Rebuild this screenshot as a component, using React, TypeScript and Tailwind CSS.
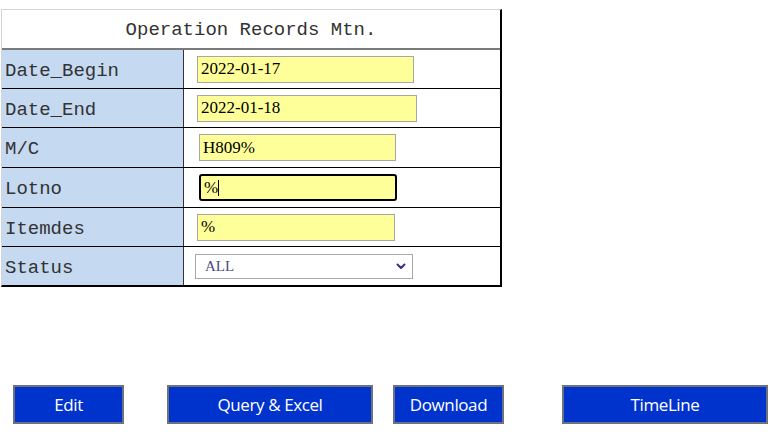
import React from 'react';

const mono = "font-['Liberation_Mono','DejaVu_Sans_Mono',monospace]";
const serif = "font-['Liberation_Serif','Times_New_Roman',serif]";

const Field = ({ value, className, focused }: { value: string; className: string; focused?: boolean }) => (
  <div
    className={`${className} h-[27px] flex items-center bg-[#ffff99] text-[17px] text-black ${serif} ${
      focused ? 'border-2 border-black rounded-[3px] pl-[3px]' : 'border border-[#a8a8a0] pl-[3px]'
    }`}
  >
    <span>{value}</span>
    {focused && <span className="w-px h-[16px] bg-black" />}
  </div>
);

const Row = ({ label, children, h, last }: { label: string; children: React.ReactNode; h: string; last?: boolean }) => (
  <div className={`flex ${h} ${last ? '' : 'border-b border-black'}`}>
    <div className={`w-[182px] bg-[#c5d9f1] border-r border-[#333] flex items-center pl-[3px] pt-[4px] text-[19px] text-[#333] ${mono}`}>
      {label}
    </div>
    <div className="flex-1 flex items-center bg-white">{children}</div>
  </div>
);

const Btn = ({ label, className }: { label: string; className: string }) => (
  <button
    className={`${className} h-[39px] bg-[#0033cc] border-2 border-[#6b7280] text-white text-[17px] font-['Open_Sans','Noto_Sans',sans-serif] tracking-[-0.4px] flex items-center justify-center`}
  >
    {label}
  </button>
);

export default function App() {
  return (
    <div className="w-[781px] h-[435px] bg-white relative">
      <div className="pt-[9px] pl-[1px]">
        <div className="w-[501px] border-t border-l border-[#d4d4d4] border-r-2 border-r-black border-b-2 border-b-black">
          <div className={`h-[40px] flex items-center justify-center pt-[2px] border-b-2 border-[#7a7a7a] text-[19px] text-[#333] ${mono}`}>
            Operation Records Mtn.
          </div>
          <Row label="Date_Begin" h="h-[39px]">
            <Field value="2022-01-17" className="ml-[13px] w-[217px]" />
          </Row>
          <Row label="Date_End" h="h-[39px]">
            <Field value="2022-01-18" className="ml-[13px] w-[220px]" />
          </Row>
          <Row label="M/C" h="h-[40px]">
            <Field value="H809%" className="ml-[15px] w-[197px]" />
          </Row>
          <Row label="Lotno" h="h-[40px]">
            <Field value="%" className="ml-[15px] w-[198px]" focused />
          </Row>
          <Row label="Itemdes" h="h-[39px]">
            <Field value="%" className="ml-[13px] w-[198px]" />
          </Row>
          <Row label="Status" h="h-[38px]" last>
            <div className={`ml-[11px] w-[218px] h-[25px] border border-[#a9a9a9] bg-white flex items-center justify-between pl-[9px] pr-[6px] text-[15px] text-[#4b4a80] ${serif}`}>
              <span>ALL</span>
              <svg width="10" height="7" viewBox="0 0 10 7" fill="none">
                <path d="M1.5 1.5 L5 5 L8.5 1.5" stroke="#3b2f80" strokeWidth="2" strokeLinecap="round" strokeLinejoin="round" />
              </svg>
            </div>
          </Row>
        </div>
      </div>
      <div className="flex items-center mt-[98px] pl-[13px]">
        <Btn label="Edit" className="w-[111px]" />
        <Btn label="Query & Excel" className="w-[206px] ml-[43px]" />
        <Btn label="Download" className="w-[111px] ml-[20px]" />
        <Btn label="TimeLine" className="w-[206px] ml-[58px]" />
      </div>
    </div>
  );
}
